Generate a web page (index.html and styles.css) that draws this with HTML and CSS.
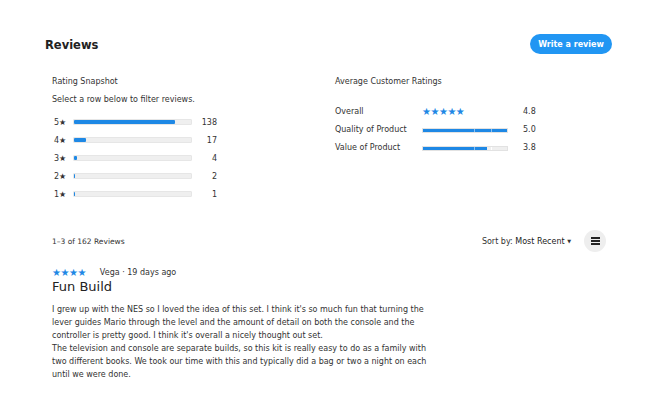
FILE: index.html
```html
<!doctype html>
<html lang="en">
  <head>
    <meta charset="UTF-8" />
    <meta name="viewport" content="width=device-width, initial-scale=1.0" />
    <title>Reviews</title>
    <link rel="stylesheet" href="styles.css">
  </head>
  <body>
    <div class="page">
      <div class="head">
        <h2 class="title">Reviews</h2>
        <button class="write">Write a review</button>
      </div>

      <div class="summary">
        <div class="snapshot">
          <p class="label">Rating Snapshot</p>
          <p class="hint">Select a row below to filter reviews.</p>
          <div class="rows">
            <div class="row">
              <span class="star-num">5★</span>
              <span class="track"><span class="fill" style="width: 86%"></span></span>
              <span class="count">138</span>
            </div>
            <div class="row">
              <span class="star-num">4★</span>
              <span class="track"><span class="fill" style="width: 10%"></span></span>
              <span class="count">17</span>
            </div>
            <div class="row">
              <span class="star-num">3★</span>
              <span class="track"><span class="fill" style="width: 2.4%"></span></span>
              <span class="count">4</span>
            </div>
            <div class="row">
              <span class="star-num">2★</span>
              <span class="track"><span class="fill" style="width: 1.2%"></span></span>
              <span class="count">2</span>
            </div>
            <div class="row">
              <span class="star-num">1★</span>
              <span class="track"><span class="fill" style="width: 0.8%"></span></span>
              <span class="count">1</span>
            </div>
          </div>
        </div>

        <div class="average">
          <p class="label">Average Customer Ratings</p>
          <div class="avg-rows">
            <span class="avg-name">Overall</span>
            <span class="stars big">★★★★★</span>
            <span class="avg-val">4.8</span>

            <span class="avg-name">Quality of Product</span>
            <span class="seg"><span class="seg-fill" style="width: 100%"></span></span>
            <span class="avg-val">5.0</span>

            <span class="avg-name">Value of Product</span>
            <span class="seg"><span class="seg-fill" style="width: 76%"></span></span>
            <span class="avg-val">3.8</span>
          </div>
        </div>
      </div>

      <div class="toolbar">
        <span class="total">1–3 of 162 Reviews</span>
        <div class="sort">
          <span>Sort by: <span class="sort-val">Most Recent</span> <span class="caret">▼</span></span>
          <span class="menu">
            <svg width="9" height="8" viewBox="0 0 9 8">
              <rect x="0" y="0" width="9" height="2" fill="#222" />
              <rect x="0" y="3" width="9" height="2" fill="#222" />
              <rect x="0" y="6" width="9" height="2" fill="#222" />
            </svg>
          </span>
        </div>
      </div>

      <div class="review">
        <div class="meta">
          <span class="stars">★★★★</span>
          <span class="who">Vega · 19 days ago</span>
        </div>
        <h3 class="r-title">Fun Build</h3>
        <p class="r-text">I grew up with the NES so I loved the idea of this set. I think it's so much fun that turning the lever guides Mario through the level and the amount of detail on both the console and the controller is pretty good. I think it's overall a nicely thought out set.<br>The television and console are separate builds, so this kit is really easy to do as a family with two different books. We took our time with this and typically did a bag or two a night on each until we were done.</p>
      </div>
    </div>
  </body>
</html>
```

FILE: styles.css
```css
* {
  box-sizing: border-box;
}
body {
  margin: 0;
  background: #ffffff;
  font-family: "DejaVu Sans", sans-serif;
  color: #333333;
}
p,
h2,
h3 {
  margin: 0;
}
.page {
  width: 652px;
  padding: 34px 40px 0 45px;
}
.head {
  display: flex;
  justify-content: space-between;
  align-items: center;
  height: 20px;
}
.title {
  font-size: 11.5px;
  font-weight: bold;
  color: #222222;
  padding-top: 1px;
}
.write {
  border: none;
  background: #2196f3;
  color: #ffffff;
  font-family: "DejaVu Sans", sans-serif;
  font-weight: bold;
  font-size: 8px;
  height: 20px;
  width: 82px;
  border-radius: 10px;
  padding: 0;
}
.summary {
  display: grid;
  grid-template-columns: 283px 1fr;
  padding: 23px 0 0 7px;
}
.label {
  font-size: 8px;
  line-height: 10px;
  color: #333333;
}
.hint {
  font-size: 8px;
  line-height: 10px;
  margin-top: 8px;
}
.rows {
  margin-top: 12px;
  display: flex;
  flex-direction: column;
  gap: 8px;
}
.row {
  display: grid;
  grid-template-columns: 21px 119px 25px;
  align-items: center;
  height: 10px;
  font-size: 8px;
}
.star-num {
  padding-left: 2px;
}
.track {
  height: 6px;
  background: #efefef;
  border: 1px solid #e6e6e6;
  border-radius: 1px;
}
.fill {
  display: block;
  height: 4px;
  min-width: 1px;
  background: #1e88e5;
  border-radius: 1px;
}
.count {
  text-align: right;
}
.avg-rows {
  margin-top: 20px;
  display: grid;
  grid-template-columns: 87px 101px 20px;
  row-gap: 8px;
  align-items: center;
  font-size: 8px;
}
.avg-rows > span {
  height: 10px;
  line-height: 10px;
}
.stars {
  color: #1e88e5;
  letter-spacing: -0.5px;
  font-size: 10px;
}
.stars.big {
  font-size: 10px;
}
.avg-rows > .seg {
  height: 5px;
  width: 86px;
  background: #efefef;
  border: 1px solid #e2e2e2;
  background-image: repeating-linear-gradient(90deg, transparent 0 16.6px, #ffffff 16.6px 17.2px);
}
.seg-fill {
  display: block;
  height: 3px;
  background: repeating-linear-gradient(90deg, #1e88e5 0 16.6px, #8cc0f0 16.6px 17.2px);
}
.toolbar {
  display: flex;
  justify-content: space-between;
  align-items: center;
  margin-top: 31px;
  padding-left: 7px;
  margin-right: 6px;
  font-size: 8px;
  height: 22px;
}
.total {
  font-size: 7.5px;
}
.sort {
  display: flex;
  align-items: center;
  gap: 13px;
}
.sort-val {
  color: #222222;
}
.caret {
  font-size: 5px;
  position: relative;
  top: -1px;
}
.menu {
  width: 22px;
  height: 22px;
  border-radius: 50%;
  background: #eeeeee;
  display: flex;
  align-items: center;
  justify-content: center;
}
.review {
  padding: 14px 0 0 7px;
}
.meta {
  display: flex;
  align-items: center;
  gap: 14px;
  height: 12px;
  font-size: 8px;
}
.r-title {
  font-size: 13px;
  font-weight: normal;
  color: #222222;
  line-height: 18px;
}
.r-text {
  margin-top: 7px;
  width: 380px;
  font-size: 8px;
  line-height: 13px;
}
```
